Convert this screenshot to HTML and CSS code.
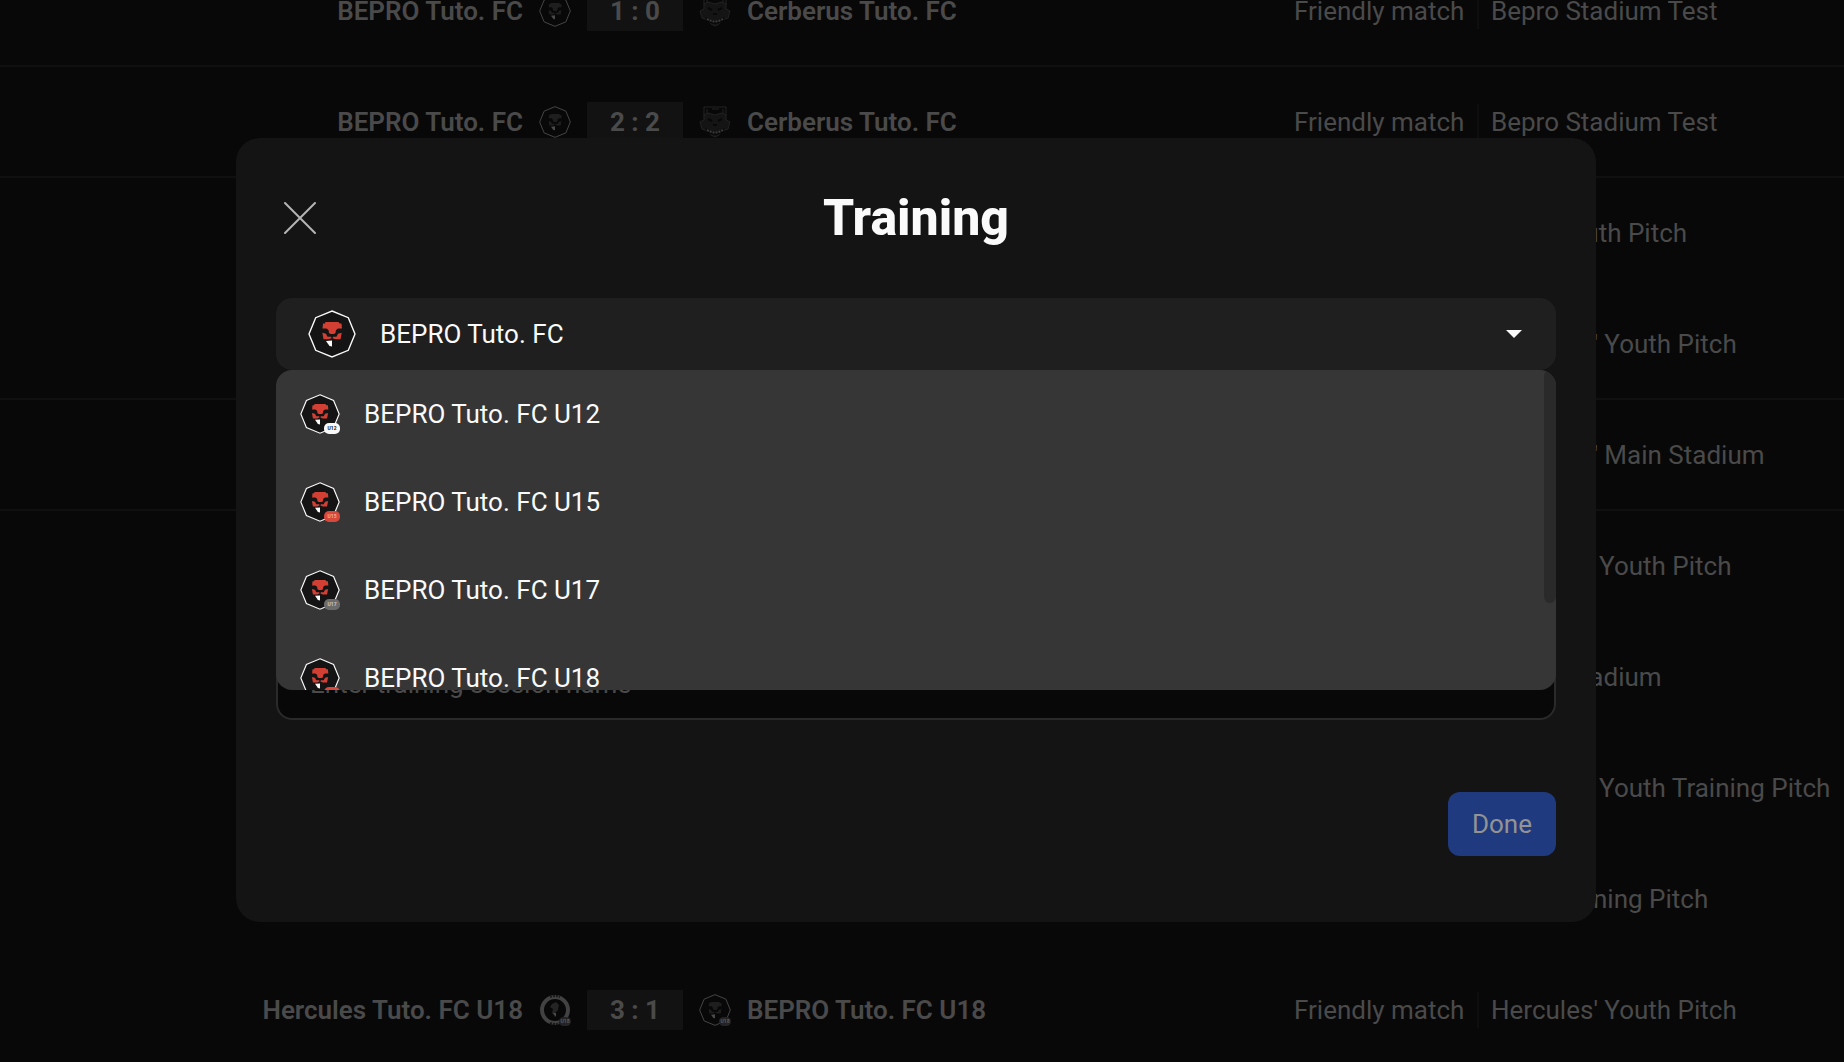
FILE: index.html
```html
<!DOCTYPE html>
<html lang="en">
<head>
    <meta charset="UTF-8">
    <meta name="viewport" content="width=device-width, initial-scale=1.0">
    <title>Training</title>
    <link rel="stylesheet" href="styles.css">
</head>
<body>
    <svg class="sprite" aria-hidden="true">
        <symbol id="bepro" viewBox="0 0 48 48">
            <path class="shield" d="M24 1 40.300 7.700 47 24 40.300 40.300 24 47 7.700 40.300 1 24 7.700 7.700Z" stroke="currentColor" stroke-width="1.400"/>
            <g class="lion">
                <path d="M17.500 12h13l1 1.500h2l.5 5h-4l-2 1.500-.5 3-1.500 1h-3.500l-1.500-1-.5-3-2-1.500h-4l.5-5h2Z"/>
                <path d="m14.300 22.800 3.700 1 1.500 3h3.500l.5 1.500-3 1h-5Zm19.400 0-3.700 1-1.500 3H25l-.5 1.500 3 1h5Z"/>
            </g>
            <path d="M18 31l6-.5v6l-2.500-.5Z" fill="currentColor"/>
        </symbol>
        <symbol id="cerberus" viewBox="0 0 32 32">
            <path d="M5 1h22v9H5Zm3 2v5m16-5v5M13 3h7" fill="none" stroke="#222" stroke-width="1"/>
            <path d="m5 9 4-2 7 2 7-2 4 2v5l4 2-2 7-6 2-3 4-4 2-4-2-3-4-6-2-2-7 4-2Z" fill="#141414" stroke="#222" stroke-width="1"/>
            <path d="m9 13 4 2m10-2-4 2m-5 4h4" fill="none" stroke="#080808" stroke-width="2"/>
            <path d="M6 22q10 7 20 0-2 7-10 7T6 22Z" fill="#080808"/>
            <path d="M8 24q8 5 16 0" fill="none" stroke="#3c3c3c" stroke-width="2" stroke-dasharray="2 1"/>
        </symbol>
        <symbol id="hercules" viewBox="0 0 32 32">
            <circle cx="16" cy="16" r="13" fill="#080808" stroke="#424242" stroke-width="4"/>
            <path d="M11 3q5-2 10 0M11 29q5 2 10 0" fill="none" stroke="#181818" stroke-width="2" stroke-dasharray="2 1"/>
            <path d="m13 10 4-2 3 3-1 5-3 3v4l-3-4 1-4-3-2Z" fill="#242424"/>
            <path d="m14 19 3 4v-4Z" fill="#4a4a4a"/>
        </symbol>
    </svg>

    <main class="matches">
        <div class="match">
            <span class="team home">BEPRO Tuto. FC</span>
            <svg class="crest"><use href="#bepro"/></svg>
            <span class="score">1 : 0</span>
            <svg class="crest"><use href="#cerberus"/></svg>
            <span class="team">Cerberus Tuto. FC</span>
            <div class="info"><span class="kind">Friendly match</span><span class="venue">Bepro Stadium Test</span></div>
        </div>
        <div class="match">
            <span class="team home">BEPRO Tuto. FC</span>
            <svg class="crest"><use href="#bepro"/></svg>
            <span class="score">2 : 2</span>
            <svg class="crest"><use href="#cerberus"/></svg>
            <span class="team">Cerberus Tuto. FC</span>
            <div class="info"><span class="kind">Friendly match</span><span class="venue">Bepro Stadium Test</span></div>
        </div>
        <div class="match same-day">
            <div class="info"><span class="kind"></span><span class="venue">Ares' Youth Pitch</span></div>
        </div>
        <div class="match">
            <div class="info"><span class="kind"></span><span class="venue">Hercules' Youth Pitch</span></div>
        </div>
        <div class="match">
            <div class="info"><span class="kind"></span><span class="venue">Hercules' Main Stadium</span></div>
        </div>
        <div class="match same-day">
            <div class="info"><span class="kind"></span><span class="venue">Olympus Youth Pitch</span></div>
        </div>
        <div class="match same-day">
            <div class="info"><span class="kind"></span><span class="venue">Bepro Stadium</span></div>
        </div>
        <div class="match same-day">
            <div class="info"><span class="kind"></span><span class="venue">Olympus Youth Training Pitch</span></div>
        </div>
        <div class="match same-day">
            <div class="info"><span class="kind"></span><span class="venue">Ares Training Pitch</span></div>
        </div>
        <div class="match same-day">
            <span class="team home">Hercules Tuto. FC U18</span>
            <span class="crest-wrap"><svg class="crest"><use href="#hercules"/></svg><span class="tag">U18</span></span>
            <span class="score">3 : 1</span>
            <span class="crest-wrap"><svg class="crest"><use href="#bepro"/></svg><span class="tag">U18</span></span>
            <span class="team">BEPRO Tuto. FC U18</span>
            <div class="info"><span class="kind">Friendly match</span><span class="venue">Hercules' Youth Pitch</span></div>
        </div>
    </main>

    <div class="overlay">
        <section class="modal" role="dialog" aria-labelledby="modalTitle">
            <header class="modal-header">
                <button class="close" type="button" aria-label="Close">
                    <svg viewBox="0 0 32 32"><path d="m1 1 30 30M31 1 1 31"/></svg>
                </button>
                <h1 class="title" id="modalTitle">Training</h1>
            </header>

            <div class="dropdown">
                <button class="selected" type="button" aria-haspopup="listbox" aria-expanded="true">
                    <svg class="selected-crest"><use href="#bepro"/></svg>
                    <span>BEPRO Tuto. FC</span>
                    <svg class="caret" viewBox="0 0 16 8"><path d="M0 0h16L8 8Z"/></svg>
                </button>
                <div class="menu">
                    <div class="options" role="listbox" aria-label="Team">
                        <button class="option" type="button" role="option">
                            <span class="crest-wrap"><svg class="option-crest"><use href="#bepro"/></svg><span class="tag white">U12</span></span>
                            BEPRO Tuto. FC U12
                        </button>
                        <button class="option" type="button" role="option">
                            <span class="crest-wrap"><svg class="option-crest"><use href="#bepro"/></svg><span class="tag red">U15</span></span>
                            BEPRO Tuto. FC U15
                        </button>
                        <button class="option" type="button" role="option">
                            <span class="crest-wrap"><svg class="option-crest"><use href="#bepro"/></svg><span class="tag gray">U17</span></span>
                            BEPRO Tuto. FC U17
                        </button>
                        <button class="option" type="button" role="option">
                            <span class="crest-wrap"><svg class="option-crest"><use href="#bepro"/></svg><span class="tag red">U18</span></span>
                            BEPRO Tuto. FC U18
                        </button>
                    </div>
                    <div class="thumb"></div>
                </div>
            </div>

            <input class="name-input" type="text" placeholder="Enter training session name" aria-label="Training session name">

            <footer class="modal-footer">
                <button class="done" type="button">Done</button>
            </footer>
        </section>
    </div>
</body>
</html>
```
FILE: styles.css
```css
* {
    margin: 0;
    padding: 0;
    box-sizing: border-box;
}

body {
    font-family: Roboto, sans-serif;
    font-size: 26px;
    line-height: 32px;
    background: #080808;
    color: #fafafa;
    height: 100vh;
    overflow: hidden;
}

button,
input {
    font: inherit;
    color: inherit;
    border: none;
    background: none;
}

.sprite {
    position: absolute;
    width: 0;
    height: 0;
}

.shield {
    fill: var(--shield, #141414);
}

.lion {
    fill: var(--lion, #d43f33);
}

/* Match list behind the modal, scrolled part of a row down */
.matches {
    --shield: #080808;
    --lion: #1e1e1e;
    margin-top: -44px;
    color: #4a4a4a;
}

.match {
    height: 111px;
    display: grid;
    grid-template-columns: 523px 32px 96px 32px 1fr 550px;
    column-gap: 16px;
    align-items: center;
    border-bottom: 2px solid #101010;
    white-space: nowrap;
}

.match.same-day {
    border-bottom-color: transparent;
}

.team {
    font-weight: 600;
}

.home {
    text-align: right;
}

.crest {
    display: block;
    width: 32px;
    height: 32px;
}

.score {
    height: 40px;
    line-height: 40px;
    text-align: center;
    font-weight: 700;
    background: #121212;
}

.info {
    grid-column: 6;
    display: flex;
    align-items: center;
}

.kind {
    flex: none;
    width: 183px;
}

.venue {
    line-height: 36px;
    padding-left: 12px;
    border-left: 2px solid #0e0e0e;
}

.crest-wrap {
    position: relative;
    flex: none;
}

.tag {
    position: absolute;
    right: 0;
    bottom: 0;
    width: 12px;
    height: 9px;
    border-radius: 5px;
    background: #242424;
    color: #5a5a5a;
    font-size: 5px;
    line-height: 9px;
    font-weight: 700;
    text-align: center;
}

/* Modal */
.overlay {
    position: fixed;
    inset: 0;
    padding: 0 12px 2px 0;
    display: flex;
    align-items: center;
    justify-content: center;
}

.modal {
    width: 1360px;
    max-width: 100%;
    padding: 48px 40px 66px;
    border-radius: 24px;
    background: #141414;
}

.modal-header {
    display: grid;
    grid-template-columns: 48px 1fr 48px;
    align-items: center;
    margin-bottom: 48px;
}

.close {
    width: 48px;
    height: 48px;
    padding: 8px;
    cursor: pointer;
}

.close svg {
    display: block;
    width: 32px;
    height: 32px;
    fill: none;
    stroke: #b4b4b4;
    stroke-width: 2;
    stroke-linecap: round;
}

.title {
    font-size: 50px;
    line-height: 64px;
    font-weight: 800;
    text-align: center;
}

.dropdown {
    position: relative;
}

.selected {
    width: 100%;
    height: 72px;
    padding: 0 34px 0 32px;
    display: flex;
    align-items: center;
    gap: 24px;
    border-radius: 16px;
    background: #1f1f1f;
    cursor: pointer;
}

.selected-crest {
    width: 48px;
    height: 48px;
}

.caret {
    width: 16px;
    height: 8px;
    margin-left: auto;
    fill: #fafafa;
}

.menu {
    position: absolute;
    top: 100%;
    left: 0;
    right: 0;
    height: 320px;
    border-radius: 16px;
    background: #363636;
    overflow: hidden;
}

.option {
    width: 100%;
    height: 88px;
    padding: 0 24px;
    display: flex;
    align-items: center;
    gap: 24px;
    cursor: pointer;
}

.option-crest {
    display: block;
    width: 40px;
    height: 40px;
}

.option .tag {
    width: 16px;
    height: 11px;
    line-height: 11px;
}

.tag.white {
    background: #fafafa;
    color: #141414;
}

.tag.red {
    background: #d9483c;
    color: #f0a8a0;
}

.tag.gray {
    background: #6c6c6c;
    color: #c8c8c8;
}

.thumb {
    position: absolute;
    top: 0;
    right: 0;
    width: 12px;
    height: 233px;
    border-radius: 6px;
    background: #2a2a2a;
}

.name-input {
    display: block;
    width: 100%;
    height: 72px;
    margin-top: 278px;
    padding: 0 32px;
    border: 2px solid #2a2a2a;
    border-radius: 16px;
    background: #080808;
}

.name-input::placeholder {
    color: #4a4a4a;
}

.modal-footer {
    display: flex;
    justify-content: flex-end;
    margin-top: 72px;
}

.done {
    height: 64px;
    padding: 0 24px;
    border-radius: 12px;
    background: #203a7f;
    color: #939393;
    cursor: pointer;
}
```
